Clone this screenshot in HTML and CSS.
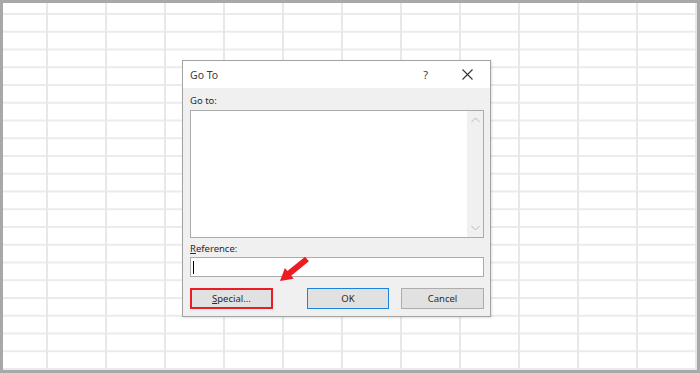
FILE: index.html
```html
<!DOCTYPE html>
<html lang="en">
<head>
    <meta charset="UTF-8">
    <meta name="viewport" content="width=device-width, initial-scale=1.0">
    <title>Go To</title>
    <link rel="stylesheet" href="styles.css">
</head>
<body>
    <div class="sheet">
        <div class="dialog">
            <div class="title-bar">
                <span class="title">Go To</span>
                <span class="help">?</span>
                <svg class="close" width="11" height="11" viewBox="0 0 11 11">
                    <path d="M0.5 0.5 L10.5 10.5 M10.5 0.5 L0.5 10.5" stroke="#333" stroke-width="1.1" fill="none"/>
                </svg>
            </div>
            <div class="dialog-body">
                <div class="label">Go to:</div>
                <div class="listbox">
                    <div class="list-items"></div>
                    <div class="scrollbar">
                        <svg width="9" height="6" viewBox="0 0 9 6"><path d="M0.5 5 L4.5 1 L8.5 5" stroke="#b8b8b8" fill="none"/></svg>
                        <svg width="9" height="6" viewBox="0 0 9 6"><path d="M0.5 1 L4.5 5 L8.5 1" stroke="#b8b8b8" fill="none"/></svg>
                    </div>
                </div>
                <div class="label ref-label"><u>R</u>eference:</div>
                <div class="textbox"><span class="caret"></span></div>
                <div class="buttons">
                    <div class="btn btn-special"><u>S</u>pecial...</div>
                    <div class="btn btn-ok">OK</div>
                    <div class="btn">Cancel</div>
                </div>
            </div>

            <!-- red pointer over the Special button -->
            <svg class="arrow" width="32" height="26" viewBox="0 0 32 26">
                <polygon points="2,25 6.9,12 9.4,15.1 27.1,0.7 30.9,5.3 13.2,19.7 15.7,22.8" fill="#ec1c24"/>
            </svg>
        </div>
    </div>
</body>
</html>
```

FILE: styles.css
```css
body {
    margin: 0;
    font-family: "Noto Sans", "Open Sans", sans-serif;
}
.sheet {
    width: 700px;
    height: 373px;
    box-sizing: border-box;
    border: 3px solid #a8a8a8;
    background-color: #fff;
    background-image:
        linear-gradient(to right, #e8e8e8 2px, transparent 2px),
        linear-gradient(to bottom, #ebebeb 2px, transparent 2px);
    background-size: 59px 100%, 100% 17.75px;
    background-position: 43px 0, 0 10px;
    padding: 57px 0 0 179px;
}
.dialog {
    position: relative;
    width: 309px;
    height: 257px;
    box-sizing: border-box;
    border: 1px solid #a3a3a3;
    box-shadow: 1px 1px 2px rgba(0, 0, 0, 0.12);
    background: #f0f0f0;
    display: flex;
    flex-direction: column;
}
.title-bar {
    height: 27px;
    background: #fff;
    display: flex;
    align-items: center;
    padding-left: 7px;
    color: #3a3a3a;
    font-size: 10.5px;
}
.title {
    flex: 1;
}
.help {
    font-size: 11px;
    margin-right: 34px;
}
.close {
    margin-right: 17px;
}
.dialog-body {
    flex: 1;
    padding: 6px 6px 0 7px;
    display: flex;
    flex-direction: column;
}
.label {
    font-size: 9.5px;
    color: #2a2a2a;
    height: 14px;
    line-height: 14px;
    margin-bottom: 2px;
}
.listbox {
    height: 128px;
    box-sizing: border-box;
    border: 1px solid #ababab;
    background: #fff;
    display: flex;
}
.list-items {
    flex: 1;
}
.scrollbar {
    width: 16px;
    background: #f0f0f0;
    display: flex;
    flex-direction: column;
    justify-content: space-between;
    align-items: center;
    padding: 6px 0 6px;
}
.ref-label {
    margin-top: 4px;
    margin-bottom: 1px;
}
.textbox {
    height: 20px;
    box-sizing: border-box;
    border: 1px solid #ababab;
    background: #fff;
    display: flex;
    align-items: center;
    padding-left: 2px;
}
.caret {
    width: 1px;
    height: 13px;
    background: #000;
}
.buttons {
    display: flex;
    margin-top: 11px;
}
.btn {
    width: 83px;
    height: 21px;
    box-sizing: border-box;
    border: 1px solid #adadad;
    background: #e1e1e1;
    font-size: 9.5px;
    color: #2a2a2a;
    display: flex;
    align-items: center;
    justify-content: center;
}
.btn-special {
    border: 2px solid #ec1c24;
    margin-right: 34px;
}
.btn-ok {
    border-color: #1a84dc;
    width: 82px;
    margin-right: 12px;
}
.arrow {
    position: absolute;
    left: 95px;
    top: 195px;
}
```
